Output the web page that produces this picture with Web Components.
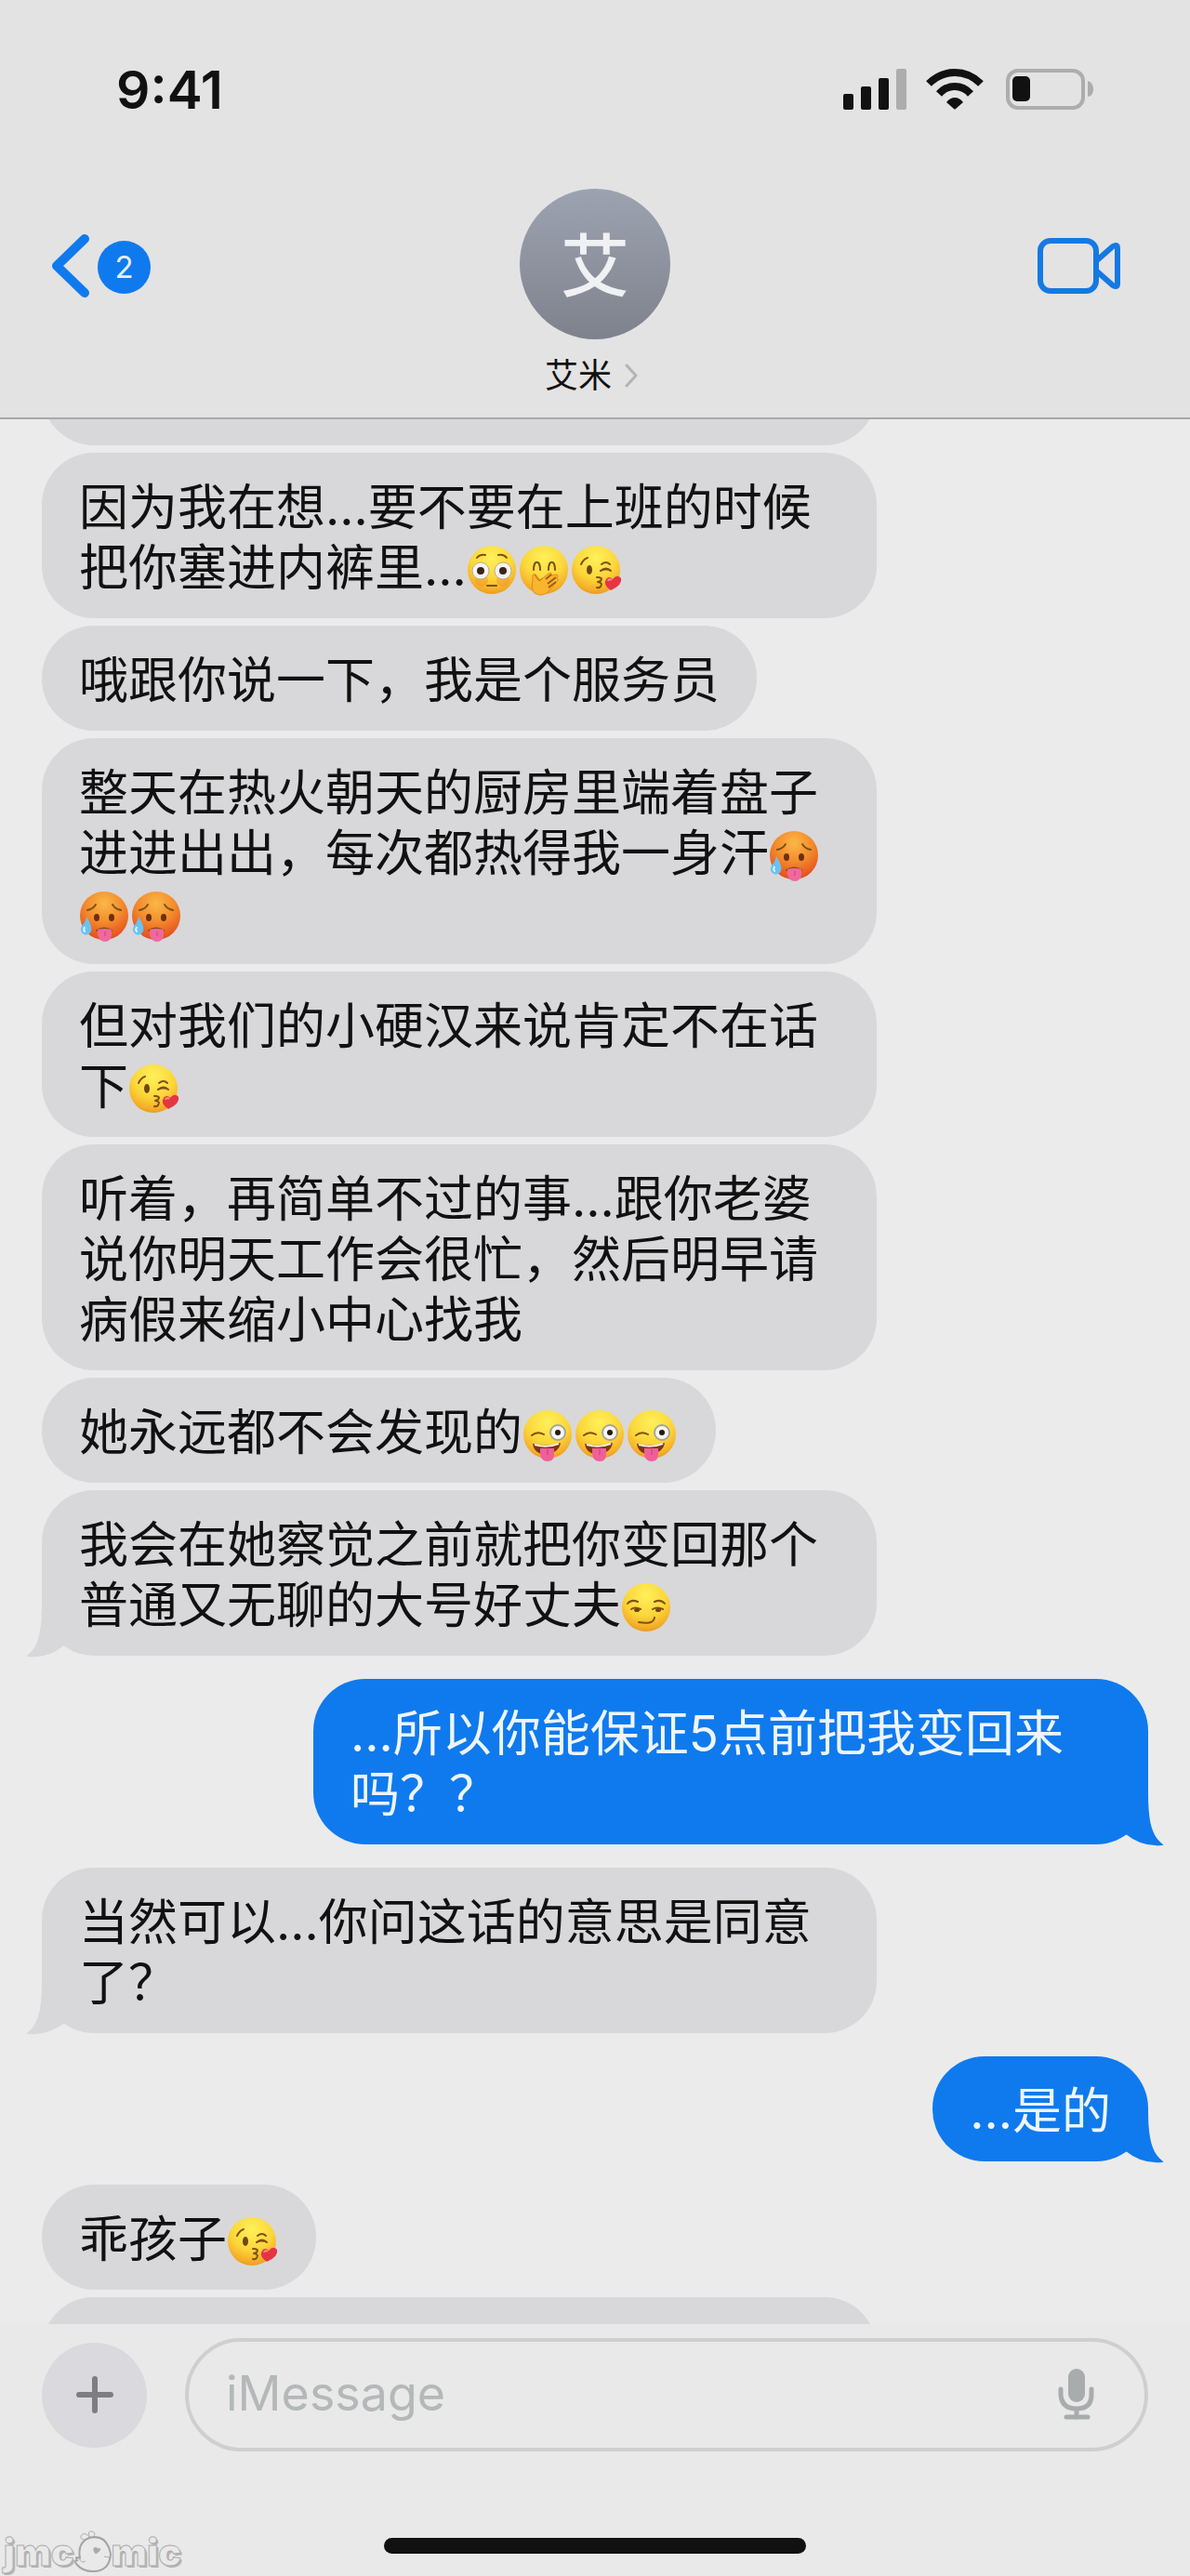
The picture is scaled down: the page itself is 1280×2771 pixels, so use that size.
<!DOCTYPE html>
<html lang="zh-CN">
<head>
<meta charset="utf-8">
<meta name="viewport" content="width=device-width, initial-scale=1">
<title>艾米</title>
<style>
  html, body { margin: 0; }
  body {
    --blue: #0f7aee;
    --ink: #111;
    background: #ebebeb;
    color: var(--ink);
    font-family: Inter, "Noto Sans CJK SC", sans-serif;
  }
</style>
</head>
<body>
<phone-screen>
  <status-bar slot="top" time="9:41"></status-bar>
  <chat-nav slot="top" name="艾米" initial="艾" unread="2"></chat-nav>
  <chat-bubble class="earlier"></chat-bubble>
  <chat-bubble>因为我在想...要不要在上班的时候把你塞进内裤里...<emo-ji kind="flushed"></emo-ji><emo-ji kind="giggle"></emo-ji><emo-ji kind="kiss"></emo-ji></chat-bubble>
  <chat-bubble>哦跟你说一下，我是个服务员</chat-bubble>
  <chat-bubble>整天在热火朝天的厨房里端着盘子进进出出，每次都热得我一身汗<emo-ji kind="hot"></emo-ji><emo-ji kind="hot"></emo-ji><emo-ji kind="hot"></emo-ji></chat-bubble>
  <chat-bubble>但对我们的小硬汉来说肯定不在话下<emo-ji kind="kiss"></emo-ji></chat-bubble>
  <chat-bubble>听着，再简单不过的事...跟你老婆说你明天工作会很忙，然后明早请病假来缩小中心找我</chat-bubble>
  <chat-bubble>她永远都不会发现的<emo-ji kind="zany"></emo-ji><emo-ji kind="zany"></emo-ji><emo-ji kind="zany"></emo-ji></chat-bubble>
  <chat-bubble tail>我会在她察觉之前就把你变回那个普通又无聊的大号好丈夫<emo-ji kind="smirk"></emo-ji></chat-bubble>
  <chat-bubble sent tail>...所以你能保证5点前把我变回来吗？？</chat-bubble>
  <chat-bubble tail>当然可以...你问这话的意思是同意了？</chat-bubble>
  <chat-bubble sent tail>...是的</chat-bubble>
  <chat-bubble>乖孩子<emo-ji kind="kiss"></emo-ji></chat-bubble>
  <chat-bubble class="later"></chat-bubble>
  <chat-composer slot="bottom"></chat-composer>
  <site-mark slot="bottom"></site-mark>
</phone-screen>

<script>
const define = (name, html, setup) => {
  const template = document.createElement('template');
  template.innerHTML = html;
  customElements.define(name, class extends HTMLElement {
    connectedCallback() {
      if (this.shadowRoot) return;
      const root = this.attachShadow({ mode: 'open' });
      root.append(template.content.cloneNode(true));
      if (setup) setup(this, root);
    }
  });
};

define('phone-screen', `
<style>
  :host { display: flex; flex-direction: column; height: 100vh; position: relative; overflow: hidden; }
  header { background: #e3e3e3; border-bottom: 2px solid #a9a9a9; }
  main { flex: 1 1 0; min-height: 0; overflow: hidden; display: flex; flex-direction: column; align-items: flex-start; gap: 8px; padding: 0 45px; }
  footer { background: #e9e9e9; }
  ::slotted(.earlier) { width: 898px; height: 113px; margin-top: -85px; }
  ::slotted(.later) { width: 898px; height: 113px; }
</style>
<header><slot name="top"></slot></header>
<main><slot></slot></main>
<footer><slot name="bottom"></slot></footer>`);

define('status-bar', `
<style>
  :host { display: flex; justify-content: space-between; align-items: center; padding: 61px 104px 0 125px; height: 70px; }
  time { font-size: 57px; font-weight: 600; line-height: 70px; padding-top: 2px; }
  .icons { display: flex; gap: 21px; }
  svg { display: block; }
</style>
<time></time>
<div class="icons">
  <svg width="68" height="44" viewBox="0 0 68 44" fill="#111" role="img" aria-label="信号">
    <rect y="27" width="11" height="17" rx="2"/><rect x="19" y="19" width="11" height="25" rx="2"/>
    <rect x="38" y="10" width="11" height="34" rx="2"/><rect x="57" width="11" height="44" rx="2" fill="#adadad"/>
  </svg>
  <svg width="62" height="44" viewBox="0 0 62 44" role="img" aria-label="无线网络">
    <path d="M3 16Q15 4 31 4T59 16" fill="none" stroke="#111" stroke-width="8"/>
    <path d="M14 27Q21 19 31 19T48 27" fill="none" stroke="#111" stroke-width="8"/>
    <path d="M22 36Q26 31 31 31T40 36L32 43Q31 44 30 43Z" fill="#111"/>
  </svg>
  <svg width="97" height="44" viewBox="0 0 97 44" role="img" aria-label="电池">
    <rect x="5" y="2" width="81" height="40" rx="11" fill="none" stroke="#adadad" stroke-width="4"/>
    <rect x="10" y="8" width="19" height="27" rx="5" fill="#111"/>
    <path d="M91 13Q97 15 97 22T91 30Z" fill="#adadad"/>
  </svg>
</div>`, (host, root) => {
  root.querySelector('time').textContent = host.getAttribute('time');
});

define('chat-nav', `
<style>
  :host { display: grid; grid-template-columns: 1fr auto 1fr; align-items: start; padding: 72px 74px 23px 55px; }
  a, button { all: unset; cursor: pointer; display: flex; align-items: center; }
  a { height: 168px; gap: 8px; color: var(--blue); justify-self: start; }
  .count { width: 57px; height: 57px; border-radius: 50%; background: var(--blue); color: #e8eef2; font-size: 33px; line-height: 57px; text-align: center; }
  .contact { flex-direction: column; gap: 17px; margin-left: 19px; }
  .avatar { box-sizing: border-box; width: 162px; height: 162px; padding-top: 4px; border-radius: 50%; background: linear-gradient(#9ca3b0, #7f828d); color: #f0f1f3; font-size: 74px; font-weight: 500; line-height: 158px; text-align: center; }
  .name { display: flex; align-items: center; gap: 14px; padding-right: 8px; font-size: 36px; line-height: 44px; }
  .video { height: 166px; justify-self: end; color: #1579e2; }
  svg { display: block; fill: none; stroke: currentColor; stroke-linecap: round; stroke-linejoin: round; }
  .name svg { color: #b4b4b4; }
</style>
<a href="#" aria-label="返回"><svg width="42" height="70" viewBox="0 0 42 70" stroke-width="10"><path d="M36 5L6 34L36 63"/></svg><span class="count"></span></a>
<button class="contact"><span class="avatar"></span><span class="name"><span class="text"></span><svg width="14" height="26" viewBox="0 0 14 26" stroke-width="3"><path d="M2 2L12 13L2 24"/></svg></span></button>
<button class="video" aria-label="视频通话"><svg width="90" height="60" viewBox="0 0 90 60" stroke-width="6"><rect x="3" y="3" width="60" height="54" rx="11"/><path d="M64 24L81 9Q86 6 86 11V49Q86 54 81 51L64 36"/></svg></button>`,
(host, root) => {
  root.querySelector('.count').textContent = host.getAttribute('unread');
  root.querySelector('.avatar').textContent = host.getAttribute('initial');
  root.querySelector('.text').textContent = host.getAttribute('name');
});

define('chat-bubble', `
<style>
  :host {
    display: block; flex: none; box-sizing: border-box; position: relative; max-width: 898px;
    padding: 27px 40px 21px; border-radius: 56px; min-height: 113px;
    background: #d8d8da; color: var(--ink); --tail: #d8d8da;
    font-size: 53px; line-height: 65px;
  }
  :host([sent]) { align-self: flex-end; margin: 17px 0; background: var(--blue); color: #eef5fb; --tail: var(--blue); }
  svg { display: none; position: absolute; left: -17px; bottom: -2px; fill: var(--tail); }
  :host([tail]) svg { display: block; }
  :host([sent]) svg { left: auto; right: -17px; transform: scaleX(-1); }
</style>
<slot></slot>
<svg width="56" height="62" viewBox="0 0 56 62" aria-hidden="true"><path d="M17 4C17 36 13 51 1 60Q0 61 2 61Q24 63 41 49L56 20Z"/></svg>`);

const gradients = {
  yellow: '<stop offset="0" stop-color="#fff05a"/><stop offset=".55" stop-color="#fbd63a"/><stop offset=".85" stop-color="#f5ae28"/><stop offset="1" stop-color="#e6951f"/>',
  orange: '<stop offset="0" stop-color="#fbb846"/><stop offset=".5" stop-color="#f38a2c"/><stop offset=".85" stop-color="#e85a22"/><stop offset="1" stop-color="#d84a1c"/>'
};
const faces = {
  flushed: ['脸红', `
    <path d="M10 13Q13 9 19 10M33 10Q39 9 42 13" class="l"/>
    <circle cx="15" cy="37" r="7" fill="#f08a2e" opacity=".4"/><circle cx="38" cy="37" r="7" fill="#f08a2e" opacity=".4"/>
    <circle cx="14" cy="27" r="9" fill="#f4f4f4" stroke="#b9ac93"/><circle cx="38" cy="27" r="9" fill="#f4f4f4" stroke="#b9ac93"/>
    <circle cx="14" cy="27" r="4" fill="#3a2418"/><circle cx="38" cy="27" r="4" fill="#3a2418"/><path d="M21 43H31" class="l"/>`],
  giggle: ['捂嘴笑', `
    <path d="M15 26C15 15 22 15 22 26M31 26C31 15 38 15 38 26" class="l"/>
    <path d="M14 36Q13 29 17 31L22 37L31 30Q35 28 34 32L39 31Q43 31 40 35Q43 36 39 40L29 51Q23 55 16 51Q12 47 14 36Z" fill="#f9b52e" stroke="#e38a20"/>
    <path d="M28 36L34 31M30 41L39 34M31 45L39 39" stroke="#a45c16" stroke-width="2" fill="none"/><path d="M16 31L20 37Q22 39 24 35" stroke="#b66c19" fill="none"/>`],
  kiss: ['飞吻', `
    <path d="M10 20Q13 14 17 13M32 20Q37 16 41 20" class="l"/><ellipse cx="19" cy="26" rx="3" ry="5" fill="#70470f"/>
    <path d="M31 27Q37 22 42 27Q37 24 31 27" class="l"/><path d="M27 34Q34 34 31 38L28 39Q34 40 31 44Q29 46 27 45" class="l"/>
    <path d="M42 48Q33 42 37 36Q40 32 44 36Q49 30 53 35Q55 42 42 48Z" fill="#e63542"/><path d="M39 38Q40 35 43 37" fill="none" stroke="#ff8b90" stroke-width="2"/>`],
  hot: ['好热', `
    <path d="M8 20Q14 19 17 14M35 14Q38 19 44 20" class="l"/>
    <ellipse cx="18" cy="28" rx="3" ry="4" fill="#6d2f12"/><ellipse cx="34" cy="28" rx="3" ry="4" fill="#6d2f12"/>
    <path d="M18 42Q26 37 34 42" class="l"/><path d="M19 41Q26 39 34 41V47Q33 54 27 54T19 47Z" fill="#f0689c"/><path d="M27 43V48" stroke="#c9447b"/>
    <path d="M7 27Q14 38 12 43Q9 48 4 46Q-1 43 2 37Q6 33 7 27Z" fill="#69c3f2"/><path d="M5 38Q3 43 6 43" fill="none" stroke="#e3f6ff" stroke-width="2"/>`],
  zany: ['吐舌眨眼', `
    <path d="M9 27Q15 22 22 26" class="l"/><circle cx="37" cy="24" r="8" fill="#f6f6f4" stroke="#aaa594" stroke-width="2"/><circle cx="37" cy="24" r="3" fill="#26190f"/>
    <path d="M10 36Q25 40 40 35Q38 46 25 47T10 36Z" fill="#7d3513"/><path d="M12 37Q25 41 38 36" stroke="#f4eee0" stroke-width="2" fill="none"/>
    <path d="M18 41H33V47Q33 55 26 55T18 47Z" fill="#ef5f99"/><path d="M26 42V48" stroke="#c63e78"/>`],
  smirk: ['得意', `
    <path d="M6 22Q10 17 17 20M35 20Q42 17 46 22M10 28Q14 25 20 28M33 28Q38 25 44 28" class="l"/>
    <ellipse cx="16" cy="29" rx="3" ry="2" fill="#70470f"/><ellipse cx="39" cy="29" rx="3" ry="2" fill="#70470f"/><path d="M18 42Q34 45 35 37" class="l"/>`]
};
define('emo-ji', `
<style>
  :host { display: inline-block; width: 56px; height: 56px; vertical-align: -11px; line-height: 0; }
  svg { display: block; overflow: visible; }
  .l { fill: none; stroke: #80510f; stroke-width: 2; stroke-linecap: round; stroke-linejoin: round; }
</style>
<svg width="56" height="56" viewBox="-1 -2 56 56" role="img"></svg>`, (host, root) => {
  const kind = host.getAttribute('kind');
  const svg = root.querySelector('svg');
  const [label, face] = faces[kind];
  svg.setAttribute('aria-label', label);
  svg.innerHTML = `<defs><radialGradient id="skin" cx=".5" cy=".25" r=".78">${gradients[kind === 'hot' ? 'orange' : 'yellow']}</radialGradient></defs><circle cx="26" cy="26" r="26" fill="url(#skin)"/>${face}`;
});

define('chat-composer', `
<style>
  :host { display: block; padding: 15px 45px 24px; }
  form { display: flex; align-items: center; gap: 41px; }
  button { all: unset; cursor: pointer; flex: none; }
  .add { width: 113px; height: 113px; border-radius: 50%; background: #d9d9de; display: grid; place-items: center; }
  .field { flex: 1; min-width: 0; box-sizing: border-box; height: 122px; border: 4px solid #cfcfcf; border-radius: 61px; display: flex; align-items: center; padding: 0 53px 0 40px; }
  input { flex: 1; min-width: 0; border: 0; padding: 0 0 3px; outline: 0; background: none; font: inherit; font-size: 52px; line-height: 65px; height: 65px; color: var(--ink); }
  input::placeholder { color: #b5b8b8; opacity: 1; }
  .home { width: 454px; height: 17px; border-radius: 9px; background: #111; margin: 93px auto 0; }
  svg { display: block; }
</style>
<form>
  <button class="add" type="button" aria-label="添加"><svg width="40" height="40" viewBox="0 0 40 40" stroke="#7d7d82" stroke-width="6" stroke-linecap="round"><path d="M20 3V37M3 20H37"/></svg></button>
  <div class="field">
    <input type="text" placeholder="iMessage" aria-label="iMessage">
    <button type="button" aria-label="语音输入"><svg width="40" height="56" viewBox="0 0 40 56" fill="none" stroke="#a8acac" stroke-width="5" stroke-linecap="round"><rect x="11" y="0" width="18" height="36" rx="9" fill="#a8acac" stroke="none"/><path d="M3 22V28Q4 43 20 43T36 28V22M20 43V52"/><path d="M9 52H32"/></svg></button>
  </div>
</form>
<div class="home"></div>`);

define('site-mark', `
<style>
  :host { position: absolute; left: 4px; bottom: 2px; display: flex; align-items: center; color: #e9e9e9; font-size: 41px; line-height: 48px; font-weight: 900; }
  span { -webkit-text-stroke: 1px #adadad; text-shadow: 2px 2px 0 #b4b4b4; }
  svg { display: block; }
</style>
<span>jmc</span>
<svg width="40" height="46" viewBox="0 0 40 46" fill="#e9e9e9" stroke="#adadad" aria-hidden="true">
  <path d="M17 8Q11 0 7 6Q6 10 12 10M17 8Q13 0 19 1Q25 3 19 8"/>
  <path d="M39 25Q38 44 20 44Q9 44 3 37Q-1 33 3 32Q0 27 6 30Q3 13 16 8Q31 4 37 18L39 25" stroke="#a4a4a4" stroke-width="2"/>
  <path d="M21 19Q24 17 25 20Q29 18 27 22L23 25Q20 22 21 19Z" fill="#aaa"/><path d="M32 28L38 29M5 30Q8 36 12 33"/>
</svg>
<span>mic</span>`);
</script>
</body>
</html>
